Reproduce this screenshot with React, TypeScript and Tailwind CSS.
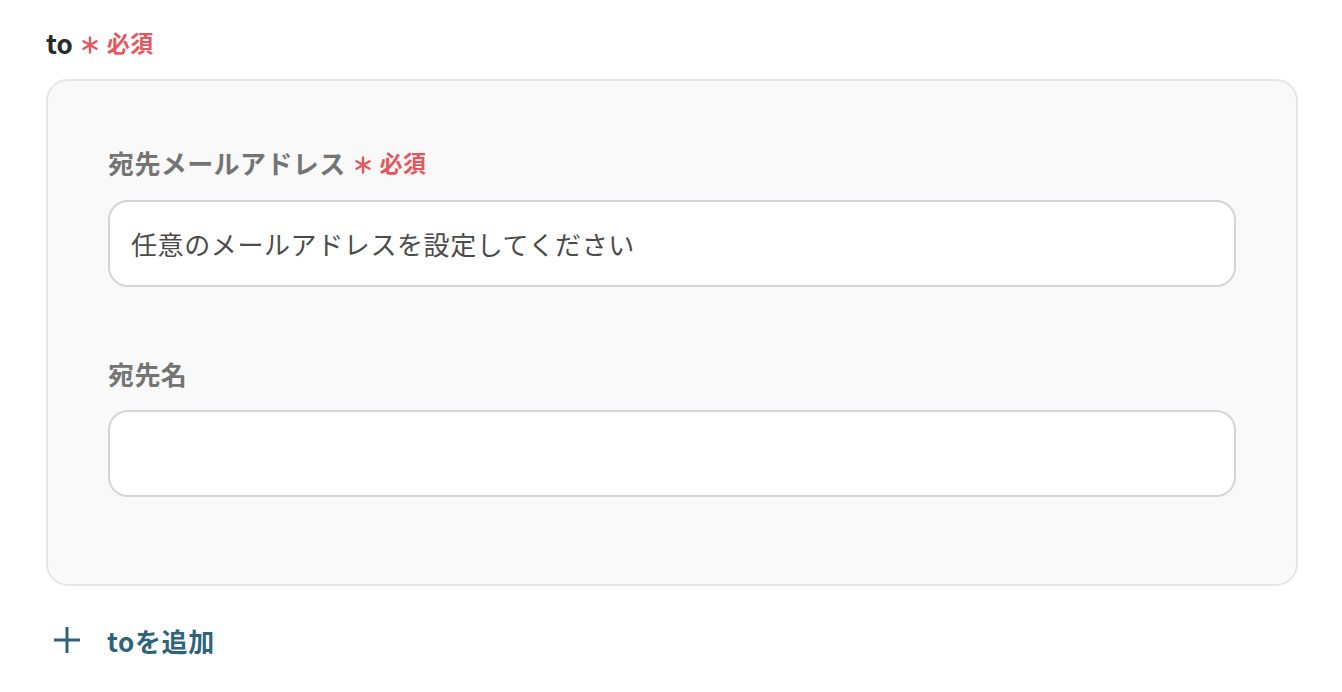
const font = { fontFamily: '"Noto Sans CJK JP", "Noto Sans", sans-serif' };

function Required() {
  return (
    <span className="inline-flex items-center gap-[8px] text-[#e5575c] text-[23px] font-bold tracking-[0.5px] ml-[8px]">
      <svg width="18" height="18" viewBox="0 0 18 18" className="mt-[5px]">
        <g stroke="#e5575c" strokeWidth="2.4" strokeLinecap="round">
          <line x1="9" y1="1.5" x2="9" y2="16.5" />
          <line x1="2.5" y1="5.2" x2="15.5" y2="12.8" />
          <line x1="2.5" y1="12.8" x2="15.5" y2="5.2" />
        </g>
      </svg>
      必須
    </span>
  );
}

export default function App() {
  return (
    <div className="bg-white w-[1342px] h-[692px] px-[46px] pt-[23px]" style={font}>
      {/* Field label */}
      <div className="flex items-center h-[38px] text-[26px] font-bold text-[#2a2a2a]">
        to
        <Required />
      </div>

      {/* Group panel */}
      <div className="mt-[18px] w-[1252px] h-[507px] bg-[#f9f9f9] border-2 border-[#e6e6e6] rounded-[22px] px-[60px] pt-[62px]">
        <div className="flex items-center h-[38px] text-[26px] font-bold tracking-[0.4px] text-[#747474]">
          宛先メールアドレス
          <Required />
        </div>
        <div className="mt-[19px] h-[87px] bg-white border-2 border-[#d2d5d9] rounded-[20px] flex items-center px-[21px] text-[26px] tracking-[0.6px] text-[#4b4b4b]">
          任意のメールアドレスを設定してください
        </div>

        <div className="mt-[67px] flex items-center h-[38px] text-[26px] font-bold tracking-[0.4px] text-[#747474]">
          宛先名
        </div>
        <div className="mt-[18px] h-[87px] bg-white border-2 border-[#d2d5d9] rounded-[20px]" />
      </div>

      {/* Add button */}
      <button className="mt-[35px] h-[38px] flex items-center gap-[27px] text-[26px] font-bold tracking-[0.6px] text-[#2e6479] ml-[8px]">
        <svg width="26" height="26" viewBox="0 0 26 26">
          <g stroke="#2e6479" strokeWidth="3">
            <line x1="0" y1="13" x2="26" y2="13" />
            <line x1="13" y1="0" x2="13" y2="26" />
          </g>
        </svg>
        toを追加
      </button>
    </div>
  );
}
